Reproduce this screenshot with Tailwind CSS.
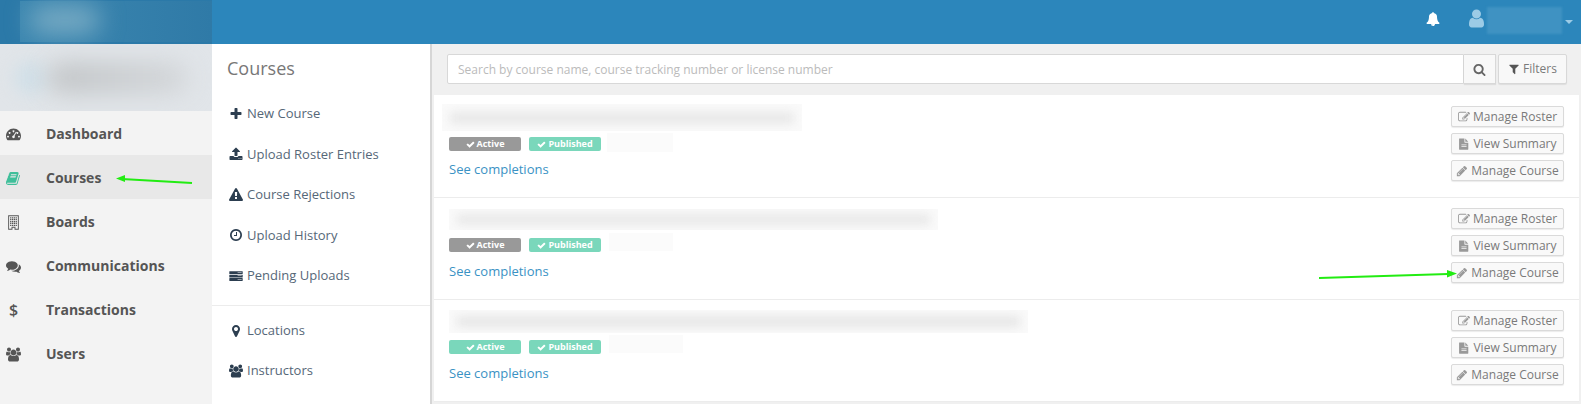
<!DOCTYPE html>
<html lang="en">
<head>
<meta charset="UTF-8">
<title>Courses</title>
<script src="https://cdn.jsdelivr.net/npm/@tailwindcss/browser@4"></script>
</head>
<body class="font-['Open_Sans',sans-serif] bg-[#f0f0f0]">
<svg class="hidden">
  <symbol id="i-plus" viewBox="0 0 1792 1792"><path d="M1600 736v192q0 40-28 68t-68 28h-416v416q0 40-28 68t-68 28h-192q-40 0-68-28t-28-68v-416h-416q-40 0-68-28t-28-68v-192q0-40 28-68t68-28h416v-416q0-40 28-68t68-28h192q40 0 68 28t28 68v416h416q40 0 68 28t28 68z"/></symbol>
  <symbol id="i-upload" viewBox="0 0 1792 1792"><path d="M1344 1472q0-26-19-45t-45-19-45 19-19 45 19 45 45 19 45-19 19-45zm256 0q0-26-19-45t-45-19-45 19-19 45 19 45 45 19 45-19 19-45zm128-224v320q0 40-28 68t-68 28h-1472q-40 0-68-28t-28-68v-320q0-40 28-68t68-28h427q21 56 70.500 92t110.500 36h256q61 0 110.500-36t70.500-92h427q40 0 68 28t28 68zm-325-648q-17 40-59 40h-256v448q0 26-19 45t-45 19h-256q-26 0-45-19t-19-45v-448h-256q-42 0-59-40-17-39 14-69l448-448q18-19 45-19t45 19l448 448q31 30 14 69z"/></symbol>
  <symbol id="i-warning" viewBox="0 0 1792 1792"><path d="M1024 1375v-190q0-14-9.500-23.500t-22.500-9.500h-192q-13 0-22.500 9.500t-9.500 23.500v190q0 14 9.500 23.500t22.500 9.500h192q13 0 22.500-9.500t9.500-23.500zm-2-374l18-459q0-12-10-19-13-11-24-11h-220q-11 0-24 11-10 7-10 21l17 457q0 10 10 16.500t24 6.500h185q14 0 23.500-6.500t10.500-16.500zm-14-934l768 1408q35 63-2 126-17 29-46.500 46t-63.500 17h-1536q-34 0-63.500-17t-46.500-46q-37-63-2-126l768-1408q17-31 47-49t65-18 65 18 47 49z"/></symbol>
  <symbol id="i-clock" viewBox="0 0 1792 1792"><path d="M1024 544v448q0 14-9 23t-23 9h-320q-14 0-23-9t-9-23v-64q0-14 9-23t23-9h224v-352q0-14 9-23t23-9h64q14 0 23 9t9 23zm416 352q0-148-73-273t-198-198-273-73-273 73-198 198-73 273 73 273 198 198 273 73 273-73 198-198 73-273zm224 0q0 209-103 385.500t-279.500 279.500-385.500 103-385.500-103-279.500-279.500-103-385.500 103-385.500 279.500-279.500 385.500-103 385.500 103 279.500 279.500 103 385.500z"/></symbol>
  <symbol id="i-server" viewBox="0 0 1792 1792"><path fill-rule="evenodd" d="M80 280h1632q40 0 40 40v280q0 40-40 40H80q-40 0-40-40V320q0-40 40-40zM1100 400v70h520v-70zM80 720h1632q40 0 40 40v280q0 40-40 40H80q-40 0-40-40V760q0-40 40-40zM1100 840v70h520v-70zM80 1160h1632q40 0 40 40v280q0 40-40 40H80q-40 0-40-40v-280q0-40 40-40zM1100 1280v70h520v-70z"/></symbol>
  <symbol id="i-marker" viewBox="-384 0 1792 1792"><path d="M768 640q0-106-75-181t-181-75-181 75-75 181 75 181 181 75 181-75 75-181zm256 0q0 109-33 179l-364 774q-16 33-47.500 52t-67.500 19-67.500-19-46.500-52l-365-774q-33-70-33-179 0-212 150-362t362-150 362 150 150 362z"/></symbol>
  <symbol id="i-users" viewBox="-64 0 1920 1792"><path d="M529 896q-162 5-265 128h-134q-82 0-138-40.500t-56-118.500q0-353 124-353 6 0 43.500 21t97.500 42.500 119 21.500q67 0 133-23-5 37-5 66 0 139 81 256zm1071 637q0 120-73 189.500t-194 69.500h-874q-121 0-194-69.500t-73-189.500q0-53 3.500-103.500t14-109 26.500-108.500 43-97.500 62-81 85.500-53.500 111.500-20q10 0 43 21.500t73 48 107 48 135 21.500 135-21.500 107-48 73-48 43-21.500q61 0 111.500 20t85.500 53.500 62 81 43 97.500 26.500 108.500 14 109 3.500 103.500zm-1024-1277q0 106-75 181t-181 75-181-75-75-181 75-181 181-75 181 75 75 181zm704 384q0 159-112.500 271.500t-271.500 112.500-271.500-112.500-112.500-271.500 112.500-271.500 271.500-112.500 271.500 112.500 112.500 271.500zm576 225q0 78-56 118.500t-138 40.500h-134q-103-123-265-128 81-117 81-256 0-29-5-66 66 23 133 23 59 0 119-21.500t97.500-42.500 43.500-21q124 0 124 353zm-128-609q0 106-75 181t-181 75-181-75-75-181 75-181 181-75 181 75 75 181z"/></symbol>
  <symbol id="i-comments" viewBox="0 0 1792 1792"><path d="M1408 768q0 139-94 257t-256.500 186.500-353.500 68.500q-86 0-176-16-124 88-278 128-36 9-86 16h-3q-11 0-20.500-8t-11.500-21q-1-3-1-6.500t.5-6.500 2-6l2.500-5 3.500-5.500 4-5 4.500-5 4-4.500q5-6 23-25t26-29.500 22.500-29 25-38.500 20.500-44q-124-72-195-177t-71-224q0-139 94-257t256.500-186.500 353.500-68.500 353.500 68.500 256.500 186.500 94 257zm384 256q0 120-71 224.500t-195 176.500q10 24 20.500 44t25 38.500 22.500 29 26 29.500 23 25q1 1 4 4.500t4.500 5 4 5 3.500 5.500l2.500 5 2 6 .5 6.500-1 6.500q-3 14-13 22t-22 7q-50-7-86-16-154-40-278-128-90 16-176 16-271 0-472-132 58 4 88 4 161 0 309-45t264-129q125-92 192-212t67-254q0-77-23-152 129 71 204 178t75 230z"/></symbol>
  <symbol id="i-dashboard" viewBox="0 0 1792 1792"><path fill-rule="evenodd" d="M896 192c490 0 896 400 896 896 0 170-45 320-130 450-16 24-44 38-74 38H204c-30 0-58-14-74-38C45 1408 0 1258 0 1088c0-496 406-896 896-896zM896 400a110 110 0 1 0 1 0zM430 600a110 110 0 1 0 1 0zM1360 600a110 110 0 1 0 1 0zM240 1040a110 110 0 1 0 1 0zM1550 1040a110 110 0 1 0 1 0zM1180 560L900 1010c-90 0-160 70-160 160s70 160 160 160 160-70 160-160c0-40-15-80-40-105L1270 600z"/></symbol>
  <symbol id="i-book" viewBox="0 0 1792 1792"><path d="M1639 478q40 57 18 129l-275 906q-19 64-76.500 107.500t-122.500 43.500h-923q-77 0-148.500-53.500t-99.500-131.500q-24-67-2-127 0-4 3-27t4-37q1-8-3-21.500t-3-19.500q2-11 8-21t16.500-23.500 16.500-23.500q23-38 45-91.500t30-91.500q3-10 .5-30t-.5-28q3-11 17-28t17-23q21-36 42-92t25-90q1-9-2.500-32t.5-28q4-13 22-30.500t22-22.500q19-26 42.500-84.500t27.500-96.500q1-8-3-25.500t-2-26.500q2-8 9-18t18-23 17-21q8-12 16.500-30.500t15-35 16-36 19.500-32 26.500-23.500 36-11.500 47.500 5.500l-1 3q38-9 51-9h761q74 0 114 56t18 130l-274 906q-36 119-71.500 153.500t-128.500 34.500h-869q-27 0-38 15-11 16-1 43 24 70 144 70h923q29 0 56-15.500t35-41.500l300-987q7-22 5-57 38 15 59 43zm-1064 2q-4 13 2 22.500t20 9.500h608q13 0 25.500-9.500t16.500-22.500l21-64q4-13-2-22.500t-20-9.500h-608q-13 0-25.500 9.500t-16.500 22.500zm-83 256q-4 13 2 22.500t20 9.500h608q13 0 25.500-9.500t16.500-22.500l21-64q4-13-2-22.500t-20-9.500h-608q-13 0-25.500 9.500t-16.500 22.500z"/></symbol>
  <symbol id="i-building" viewBox="0 0 1792 1792"><path fill-rule="evenodd" d="M260 40h1270v1712H1020v-230H770v230H260zM370 150v1490h290v-230h470v230h290V150zM490 270h150v150H490zM710 270h150v150H710zM930 270h150v150H930zM1150 270h150v150h-150zM490 490h150v150H490zM710 490h150v150H710zM930 490h150v150H930zM1150 490h150v150h-150zM490 710h150v150H490zM710 710h150v150H710zM930 710h150v150H930zM1150 710h150v150h-150zM490 930h150v150H490zM710 930h150v150H710zM930 930h150v150H930zM1150 930h150v150h-150zM490 1150h150v150H490zM710 1150h150v150H710zM930 1150h150v150H930zM1150 1150h150v150h-150z"/></symbol>
  <symbol id="i-search" viewBox="0 0 1792 1792"><path d="M1216 832q0-185-131.500-316.500t-316.500-131.500-316.500 131.500-131.500 316.500 131.500 316.500 316.500 131.500 316.500-131.500 131.500-316.500zm512 832q0 52-38 90t-90 38q-54 0-90-38l-343-342q-179 124-399 124-143 0-273.500-55.500t-225-150-150-225-55.500-273.500 55.500-273.500 150-225 225-150 273.500-55.500 273.500 55.500 225 150 150 225 55.500 273.500q0 220-124 399l343 343q37 37 37 90z"/></symbol>
  <symbol id="i-filter" viewBox="0 0 1792 1792"><path d="M1595 295q17 41-14 70l-493 493v742q0 42-39 59-13 5-25 5-27 0-45-19l-256-256q-19-19-19-45v-486l-493-493q-31-29-14-70 17-39 59-39h1280q42 0 59 39z"/></symbol>
  <symbol id="i-bell" viewBox="0 0 1792 1792"><path d="M912 1696q0-16-16-16-59 0-101.500-42.500t-42.500-101.500q0-16-16-16t-16 16q0 73 51.500 124.500t124.500 51.500q16 0 16-16zm816-288q0 52-38 90t-90 38h-448q0 106-75 181t-181 75-181-75-75-181h-448q-52 0-90-38t-38-90q50-42 91-88t85-119.500 74.500-158.500 50-206 19.500-260q0-152 117-282.500t307-158.500q-8-19-8-39 0-40 28-68t68-28 68 28 28 68q0 20-8 39 190 28 307 158.500t117 282.500q0 139 19.500 260t50 206 74.500 158.500 85 119.500 91 88z"/></symbol>
  <symbol id="i-user" viewBox="0 0 1792 1792"><path d="M1536 1399q0 109-62.500 187t-150.500 78h-854q-88 0-150.500-78t-62.500-187q0-85 8.500-160.500t31.500-152 58.500-131 94-89 134.500-34.500q131 128 313 128t313-128q76 0 134.500 34.500t94 89 58.500 131 31.500 152 8.500 160.500zm-256-887q0 159-112.500 271.500t-271.500 112.500-271.500-112.500-112.500-271.500 112.500-271.500 271.500-112.500 271.500 112.500 112.500 271.500z"/></symbol>
  <symbol id="i-check" viewBox="0 0 1792 1792"><path d="M1671 566q0 40-28 68l-724 724-136 136q-28 28-68 28t-68-28l-136-136-362-362q-28-28-28-68t28-68l136-136q28-28 68-28t68 28l294 295 656-657q28-28 68-28t68 28l136 136q28 28 28 68z"/></symbol>
  <symbol id="i-edit" viewBox="0 0 1792 1792"><path d="M888 1184l116-116-152-152-116 116v56h96v96h56zm440-720q-16-16-33 1l-350 350q-17 17-1 33t33-1l350-350q17-17 1-33zm80 594v190q0 119-84.500 203.500t-203.500 84.500h-832q-119 0-203.500-84.500t-84.500-203.500v-832q0-119 84.500-203.500t203.500-84.500h832q63 0 117 25 15 7 18 23 3 17-9 29l-49 49q-14 14-32 8-23-6-45-6h-832q-66 0-113 47t-47 113v832q0 66 47 113t113 47h832q66 0 113-47t47-113v-126q0-13 9-22l64-64q15-15 35-7t20 29zm-96-738l288 288-672 672h-288v-288zm444 132l-92 92-288-288 92-92q28-28 68-28t68 28l152 152q28 28 28 68t-28 68z"/></symbol>
  <symbol id="i-file" viewBox="0 0 1792 1792"><path fill-rule="evenodd" d="M256 64h704v544q0 40 28 68t68 28h480v960q0 40-28 68t-68 28H256q-40 0-68-28t-28-68V160q0-40 28-68t68-28zM512 960v128h768V960zM512 1216v128h768v-128zM1088 64l448 480h-448z"/></symbol>
  <symbol id="i-pencil" viewBox="0 0 1792 1792"><path d="M491 1536l91-91-235-235-91 91v107h128v128h107zm523-928q0-22-22-22-10 0-17 7l-542 542q-7 7-7 17 0 22 22 22 10 0 17-7l542-542q7-7 7-17zm-54-192l416 416-832 832h-416v-416zm683 96q0 53-37 90l-166 166-416-416 166-165q36-38 90-38 53 0 91 38l235 234q37 39 37 91z"/></symbol>
</svg>

<div class="relative w-[1581px] h-[404px] overflow-hidden">
  <!-- Top bar -->
  <header class="h-11 flex bg-[#2c86bb]">
    <div class="w-[212px] bg-[#2b79a8] overflow-hidden relative">
      <div class="absolute left-[20px] top-[1px] w-[192px] h-[41px] bg-gradient-to-r from-[#3c87b0] to-[#2f7aa7]"></div>
      <div class="absolute left-[30px] top-[6px] w-[70px] h-[28px] rounded-full bg-[#78abc4] blur-md"></div>
    </div>
    <div class="flex-1 flex items-center justify-end pb-[6px]">
      <svg class="w-[14px] h-[14px] fill-white mr-[26px]"><use href="#i-bell"/></svg>
      <svg class="w-[21px] h-[21px] fill-[#9ccbe6] mr-[0px] -mt-[2px]"><use href="#i-user"/></svg>
      <div class="w-[75px] h-[27px] bg-[#3f92c2] blur-[1px] mr-[3px] mt-[3px]"></div>
      <div class="w-0 h-0 mr-[8px] mt-[5px] border-x-[4px] border-x-transparent border-t-[4px] border-t-[#9ccbe6]"></div>
    </div>
  </header>

  <div class="flex h-[360px]">
    <!-- Main sidebar -->
    <aside class="w-[212px] bg-[#f3f3f3] shrink-0">
      <div class="h-[67px] bg-[#e1e5e9] flex items-center px-[14px] overflow-hidden">
        <div class="w-[34px] h-[34px] rounded-full bg-[#d2e0e8] blur-sm"></div>
        <div class="w-[140px] h-[30px] rounded-full bg-gradient-to-r from-[#bfc2c4] to-[#d3d6d9] blur-md"></div>
      </div>
      <nav class="text-sm font-bold text-[#555]">
        <a class="h-11 pt-[2px] flex items-center"><svg class="w-[15px] h-[15px] ml-[6px] mr-[25px] fill-[#555]"><use href="#i-dashboard"/></svg>Dashboard</a>
        <a class="h-11 pt-[2px] flex items-center bg-[#e8e8e8]"><svg class="w-[15px] h-[15px] ml-[6px] mr-[25px] fill-[#3fbf9a]"><use href="#i-book"/></svg>Courses</a>
        <a class="h-11 pt-[2px] flex items-center"><svg class="w-[15px] h-[15px] ml-[6px] mr-[25px] fill-[#555]"><use href="#i-building"/></svg>Boards</a>
        <a class="h-11 pt-[2px] flex items-center"><svg class="w-[15px] h-[15px] ml-[6px] mr-[25px] fill-[#555]"><use href="#i-comments"/></svg>Communications</a>
        <a class="h-11 pt-[2px] flex items-center"><span class="w-[15px] ml-[6px] mr-[25px] text-center text-base font-semibold">$</span>Transactions</a>
        <a class="h-11 pt-[2px] flex items-center"><svg class="w-[15px] h-[15px] ml-[6px] mr-[25px] fill-[#555]"><use href="#i-users"/></svg>Users</a>
      </nav>
    </aside>

    <!-- Secondary menu -->
    <aside class="w-[218px] bg-white shrink-0">
      <h2 class="text-lg text-[#777] ml-[15px] mt-[11px] h-[26px] leading-[26px]">Courses</h2>
      <ul class="mt-[12px] pt-[0.5px] text-[13px] text-[#566778]">
        <li class="h-[40.5px] flex items-center pl-[17px]"><svg class="w-[14px] h-[14px] fill-[#2c3e50] mr-[4px]"><use href="#i-plus"/></svg>New Course</li>
        <li class="h-[40.5px] flex items-center pl-[17px]"><svg class="w-[14px] h-[14px] fill-[#2c3e50] mr-[4px]"><use href="#i-upload"/></svg>Upload Roster Entries</li>
        <li class="h-[40.5px] flex items-center pl-[17px]"><svg class="w-[14px] h-[14px] fill-[#2c3e50] mr-[4px]"><use href="#i-warning"/></svg>Course Rejections</li>
        <li class="h-[40.5px] flex items-center pl-[17px]"><svg class="w-[14px] h-[14px] fill-[#2c3e50] mr-[4px]"><use href="#i-clock"/></svg>Upload History</li>
        <li class="h-[40.5px] flex items-center pl-[17px]"><svg class="w-[14px] h-[14px] fill-[#2c3e50] mr-[4px]"><use href="#i-server"/></svg>Pending Uploads</li>
      </ul>
      <div class="mt-[9px] border-t border-[#ececec]"></div>
      <ul class="mt-[5px] text-[13px] text-[#566778]">
        <li class="h-[40px] flex items-center pl-[17px]"><svg class="w-[14px] h-[14px] fill-[#2c3e50] mr-[4px]"><use href="#i-marker"/></svg>Locations</li>
        <li class="h-[40px] flex items-center pl-[17px]"><svg class="w-[14px] h-[14px] fill-[#2c3e50] mr-[4px]"><use href="#i-users"/></svg>Instructors</li>
      </ul>
    </aside>

    <!-- Main content -->
    <main class="flex-1 border-l-2 border-[#d6d6d6] pl-[2px] pr-[2px]">
      <div class="flex mt-[10px] ml-[13px] mr-[12px] h-[30px] gap-[2px]">
        <div class="flex flex-1">
          <div class="flex-1 bg-white border border-[#d8d8d8] rounded-l-[2px] flex items-center pl-[10px] pt-[2px] text-xs text-[#bbb]">Search by course name, course tracking number or license number</div>
          <button class="w-[32px] bg-[#f8f8f8] border border-l-0 border-[#d8d8d8] shadow-[0_1px_1px_rgba(0,0,0,0.08)] flex items-center justify-center"><svg class="w-[13px] h-[13px] fill-[#666]"><use href="#i-search"/></svg></button>
        </div>
        <button class="w-[69px] bg-[#f8f8f8] border border-[#d8d8d8] rounded-[2px] shadow-[0_1px_1px_rgba(0,0,0,0.08)] flex items-center justify-center gap-[3px] text-xs text-[#7a7a7a]"><svg class="w-[12px] h-[12px] fill-[#555]"><use href="#i-filter"/></svg>Filters</button>
      </div>

      <section class="mt-[11px] pt-[1px] bg-white">
        <!-- Row 1 -->
        <div class="h-[102px] border-b border-[#ececec] flex justify-between relative">
          <div class="pl-[15px]">
            <div class="absolute left-[8px] top-[8px] w-[360px] h-[27px] bg-[#fafafa] overflow-hidden px-[8px] pt-[8px]">
              <div class="h-[12px] bg-[#e8e8e8] blur-[5px]"></div>
            </div>
            <div class="flex items-center gap-[8px] mt-[40px]">
              <span class="w-[72px] h-[14px] rounded-[2px] bg-[#999] text-white text-[9px] font-bold flex items-center justify-center gap-[2px]"><svg class="w-[9px] h-[9px] fill-white"><use href="#i-check"/></svg>Active</span>
              <span class="w-[72px] h-[14px] rounded-[2px] bg-[#7ad7bb] text-white text-[9px] font-bold flex items-center justify-center gap-[2px]"><svg class="w-[9px] h-[9px] fill-white"><use href="#i-check"/></svg>Published</span>
              <div class="w-[66px] h-[19px] bg-[#fbfbfb] -ml-[2px] -mt-[3px]"></div>
            </div>
            <a class="block mt-[8px] text-[13px] leading-[18px] text-[#3a92c4]">See completions</a>
          </div>
          <div class="flex flex-col gap-[6px] mt-[10px] mr-[15px] w-[113px] text-xs text-[#7a7a7a]">
            <button class="h-[21px] bg-[#f9f9f9] border border-[#dadada] rounded-[2px] shadow-[0_1px_1px_rgba(0,0,0,0.08)] flex items-center justify-center gap-[3px]"><svg class="w-[12px] h-[12px] fill-[#999]"><use href="#i-edit"/></svg>Manage Roster</button>
            <button class="h-[21px] bg-[#f9f9f9] border border-[#dadada] rounded-[2px] shadow-[0_1px_1px_rgba(0,0,0,0.08)] flex items-center justify-center gap-[3px]"><svg class="w-[12px] h-[12px] fill-[#999]"><use href="#i-file"/></svg>View Summary</button>
            <button class="h-[21px] bg-[#f9f9f9] border border-[#dadada] rounded-[2px] shadow-[0_1px_1px_rgba(0,0,0,0.08)] flex items-center justify-center gap-[3px]"><svg class="w-[12px] h-[12px] fill-[#999]"><use href="#i-pencil"/></svg>Manage Course</button>
          </div>
        </div>
        <!-- Row 2 -->
        <div class="h-[102px] border-b border-[#ececec] flex justify-between relative">
          <div class="pl-[15px]">
            <div class="absolute left-[15px] top-[11px] w-[489px] h-[21px] bg-[#fafafa] overflow-hidden px-[8px] pt-[5px]">
              <div class="h-[11px] bg-[#e8e8e8] blur-[5px]"></div>
            </div>
            <div class="flex items-center gap-[8px] mt-[40px]">
              <span class="w-[72px] h-[14px] rounded-[2px] bg-[#999] text-white text-[9px] font-bold flex items-center justify-center gap-[2px]"><svg class="w-[9px] h-[9px] fill-white"><use href="#i-check"/></svg>Active</span>
              <span class="w-[72px] h-[14px] rounded-[2px] bg-[#7ad7bb] text-white text-[9px] font-bold flex items-center justify-center gap-[2px]"><svg class="w-[9px] h-[9px] fill-white"><use href="#i-check"/></svg>Published</span>
              <div class="w-[64px] h-[18px] bg-[#fbfbfb] mt-[-6px]"></div>
            </div>
            <a class="block mt-[10px] text-[13px] leading-[18px] text-[#3a92c4]">See completions</a>
          </div>
          <div class="flex flex-col gap-[6px] mt-[10px] mr-[15px] w-[113px] text-xs text-[#7a7a7a]">
            <button class="h-[21px] bg-[#f9f9f9] border border-[#dadada] rounded-[2px] shadow-[0_1px_1px_rgba(0,0,0,0.08)] flex items-center justify-center gap-[3px]"><svg class="w-[12px] h-[12px] fill-[#999]"><use href="#i-edit"/></svg>Manage Roster</button>
            <button class="h-[21px] bg-[#f9f9f9] border border-[#dadada] rounded-[2px] shadow-[0_1px_1px_rgba(0,0,0,0.08)] flex items-center justify-center gap-[3px]"><svg class="w-[12px] h-[12px] fill-[#999]"><use href="#i-file"/></svg>View Summary</button>
            <button class="h-[21px] bg-[#f9f9f9] border border-[#dadada] rounded-[2px] shadow-[0_1px_1px_rgba(0,0,0,0.08)] flex items-center justify-center gap-[3px]"><svg class="w-[12px] h-[12px] fill-[#999]"><use href="#i-pencil"/></svg>Manage Course</button>
          </div>
        </div>
        <!-- Row 3 -->
        <div class="h-[102px] border-b border-[#ececec] flex justify-between relative">
          <div class="pl-[15px]">
            <div class="absolute left-[15px] top-[10px] w-[579px] h-[23px] bg-[#fafafa] overflow-hidden px-[8px] pt-[6px]">
              <div class="h-[11px] bg-[#e6e6e6] blur-[5px]"></div>
            </div>
            <div class="flex items-center gap-[8px] mt-[40px]">
              <span class="w-[72px] h-[14px] rounded-[2px] bg-[#7ad7bb] text-white text-[9px] font-bold flex items-center justify-center gap-[2px]"><svg class="w-[9px] h-[9px] fill-white"><use href="#i-check"/></svg>Active</span>
              <span class="w-[72px] h-[14px] rounded-[2px] bg-[#7ad7bb] text-white text-[9px] font-bold flex items-center justify-center gap-[2px]"><svg class="w-[9px] h-[9px] fill-white"><use href="#i-check"/></svg>Published</span>
              <div class="w-[74px] h-[18px] bg-[#fbfbfb] mt-[-6px]"></div>
            </div>
            <a class="block mt-[10px] text-[13px] leading-[18px] text-[#3a92c4]">See completions</a>
          </div>
          <div class="flex flex-col gap-[6px] mt-[10px] mr-[15px] w-[113px] text-xs text-[#7a7a7a]">
            <button class="h-[21px] bg-[#f9f9f9] border border-[#dadada] rounded-[2px] shadow-[0_1px_1px_rgba(0,0,0,0.08)] flex items-center justify-center gap-[3px]"><svg class="w-[12px] h-[12px] fill-[#999]"><use href="#i-edit"/></svg>Manage Roster</button>
            <button class="h-[21px] bg-[#f9f9f9] border border-[#dadada] rounded-[2px] shadow-[0_1px_1px_rgba(0,0,0,0.08)] flex items-center justify-center gap-[3px]"><svg class="w-[12px] h-[12px] fill-[#999]"><use href="#i-file"/></svg>View Summary</button>
            <button class="h-[21px] bg-[#f9f9f9] border border-[#dadada] rounded-[2px] shadow-[0_1px_1px_rgba(0,0,0,0.08)] flex items-center justify-center gap-[3px]"><svg class="w-[12px] h-[12px] fill-[#999]"><use href="#i-pencil"/></svg>Manage Course</button>
          </div>
        </div>
      </section>
    </main>
  </div>

  <!-- Annotation arrows -->
  <svg class="absolute left-0 top-0 w-[1581px] h-[404px] pointer-events-none" viewBox="0 0 1581 404">
    <line x1="192" y1="183" x2="122" y2="179" stroke="#22ec12" stroke-width="2"/>
    <polygon points="116,178.500 125,175 125,182" fill="#22ec12"/>
    <line x1="1319" y1="278" x2="1448" y2="274" stroke="#22ec12" stroke-width="2"/>
    <polygon points="1457,273.500 1447,270 1447,277.500" fill="#22ec12"/>
  </svg>
</div>
</body>
</html>
